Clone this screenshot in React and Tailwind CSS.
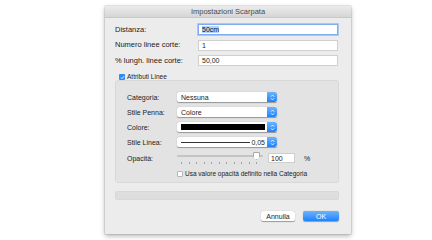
import React from "react";

const font = { fontFamily: "'Liberation Sans', Arial, sans-serif" };

function Stepper() {
  return (
    <div className="flex h-full w-[10px] shrink-0 flex-col items-center justify-center rounded-r-[2px] bg-gradient-to-b from-[#6cb3fa] to-[#1a82fb]">
      <svg width="5" height="7" viewBox="0 0 5 7" fill="none" stroke="white" strokeWidth="0.9">
        <path d="M1 2.6 L2.5 1.1 L4 2.6" />
        <path d="M1 4.4 L2.5 5.9 L4 4.4" />
      </svg>
    </div>
  );
}

function Popup({ children }) {
  return (
    <div className="flex h-[10px] w-[100px] items-stretch overflow-hidden rounded-[2px] bg-white shadow-[0_0.5px_1px_rgba(0,0,0,0.35)]">
      <div className="flex min-w-0 flex-1 items-center pl-[4px] pr-[2px]">{children}</div>
      <Stepper />
    </div>
  );
}

function Row({ label, children }) {
  return (
    <div className="flex h-[10px] items-center">
      <div className="w-[50px] text-[7px] leading-none text-[#222]">{label}</div>
      {children}
    </div>
  );
}

function Field({ label, value, focus }) {
  return (
    <div className="flex h-[11px] items-center">
      <div className="w-[83px] text-[7.5px] leading-none text-[#222]">{label}</div>
      <div
        className={
          focus
            ? "flex h-[11px] w-[140px] items-center border border-[#7eaef1] bg-white pl-[3px] shadow-[0_0_0_1px_#a9c9f5]"
            : "flex h-[11px] w-[140px] items-center border border-[#cfcfcf] bg-white pl-[3px]"
        }
      >
        <span className={focus ? "bg-[#b5d3fb] text-[7px] leading-none text-[#111]" : "text-[7px] leading-none text-[#222]"}>{value}</span>
      </div>
    </div>
  );
}

function Check({ checked, label }) {
  return (
    <div className="flex h-[6px] items-center gap-[2px]">
      <div
        className={
          checked
            ? "flex h-[6px] w-[6px] shrink-0 items-center justify-center rounded-[1px] bg-[#2b8cf7]"
            : "h-[6px] w-[6px] shrink-0 rounded-[1px] border border-[#b5b5b5] bg-white"
        }
      >
        {checked && (
          <svg width="5" height="5" viewBox="0 0 5 5" fill="none" stroke="white" strokeWidth="0.9">
            <path d="M1 2.6 L2 3.7 L4 1.2" />
          </svg>
        )}
      </div>
      <span className="text-[6.5px] leading-none text-[#222]">{label}</span>
    </div>
  );
}

export default function App() {
  const ticks = Array.from({ length: 11 });
  return (
    <div className="h-[240px] w-[432px] bg-white pl-[105px] pt-[6px]" style={font}>
      <div className="flex h-[228px] w-[246px] flex-col bg-[#ececec] shadow-[0_2px_5px_rgba(0,0,0,0.3),0_0_0_0.5px_rgba(0,0,0,0.15)]">
        {/* Title bar */}
        <div className="flex h-[12px] items-center justify-center border-b border-[#c8c8c8] bg-gradient-to-b from-[#ebebeb] to-[#d6d6d6] text-[7.5px] leading-none text-[#4a4a4a]">
          Impostazioni Scarpata
        </div>

        <div className="flex flex-col pl-[10px] pr-[12px] pt-[6px]">
          <div className="flex flex-col gap-[4.5px]">
            <Field label="Distanza:" value="50cm" focus />
            <Field label="Numero linee corte:" value="1" />
            <Field label="% lungh. linee corte:" value="50,00" />
          </div>

          <div className="mt-[8px] pl-[4px]">
            <Check checked label="Attributi Linee" />
          </div>

          {/* Group box */}
          <div className="flex h-[103px] flex-col rounded-[3px] border border-[#d8d8d8] bg-[#e3e3e3] pl-[11px] pt-[11px]">
            <div className="flex flex-col gap-[5px]">
              <Row label="Categoria:">
                <Popup>
                  <span className="text-[7px] leading-none text-[#222]">Nessuna</span>
                </Popup>
              </Row>
              <Row label="Stile Penna:">
                <Popup>
                  <span className="text-[7px] leading-none text-[#222]">Colore</span>
                </Popup>
              </Row>
              <Row label="Colore:">
                <Popup>
                  <div className="h-[6px] w-full bg-black" />
                </Popup>
              </Row>
              <Row label="Stile Linea:">
                <Popup>
                  <div className="flex w-full items-center gap-[1px]">
                    <div className="h-[0.7px] flex-1 bg-[#333]" />
                    <span className="text-[7px] leading-none text-[#222]">0,05</span>
                  </div>
                </Popup>
              </Row>
            </div>

            <div className="mt-[6px] flex h-[11px] items-start">
              <div className="w-[50px] pt-[2px] text-[7px] leading-none text-[#222]">Opacità:</div>
              <div className="relative h-[12px] w-[86px]">
                <div className="absolute left-0 right-0 top-[2px] h-[1.5px] rounded bg-[#c4c4c4]" />
                <div className="absolute left-[76px] top-[-1px] h-[8px] w-[7px] rounded-t-[1px] border border-[#a8a8a8] bg-white [clip-path:polygon(0_0,100%_0,100%_55%,50%_100%,0_55%)]" />
                <div className="absolute left-[4px] right-[6px] top-[9px] flex justify-between">
                  {ticks.map((_, i) => (
                    <div key={i} className="h-[2px] w-[0.7px] bg-[#a0a0a0]" />
                  ))}
                </div>
              </div>
              <div className="ml-[5px] flex h-[10px] w-[27px] items-center border border-[#cfcfcf] bg-white pl-[2px] text-[7px] leading-none text-[#222]">
                100
              </div>
              <span className="ml-[9px] pt-[2px] text-[7px] leading-none text-[#222]">%</span>
            </div>

            <div className="ml-[50px] mt-[7px]">
              <Check label="Usa valore opacità definito nella Categoria" />
            </div>
          </div>

          {/* Strip */}
          <div className="mt-[8px] h-[9px] rounded-[2px] border border-[#d8d8d8] bg-[#dedede]" />

          {/* Buttons */}
          <div className="mt-[11px] flex justify-end gap-[8px]">
            <div className="flex h-[10px] w-[34px] items-center justify-center rounded-[2px] bg-white text-[7px] leading-none text-[#222] shadow-[0_0.5px_1px_rgba(0,0,0,0.35)]">
              Annulla
            </div>
            <div className="flex h-[10px] w-[36px] items-center justify-center rounded-[2px] bg-gradient-to-b from-[#6cb3fa] to-[#1a82fb] text-[7px] leading-none text-white shadow-[0_0.5px_1px_rgba(0,0,0,0.35)]">
              OK
            </div>
          </div>
        </div>
      </div>
    </div>
  );
}
